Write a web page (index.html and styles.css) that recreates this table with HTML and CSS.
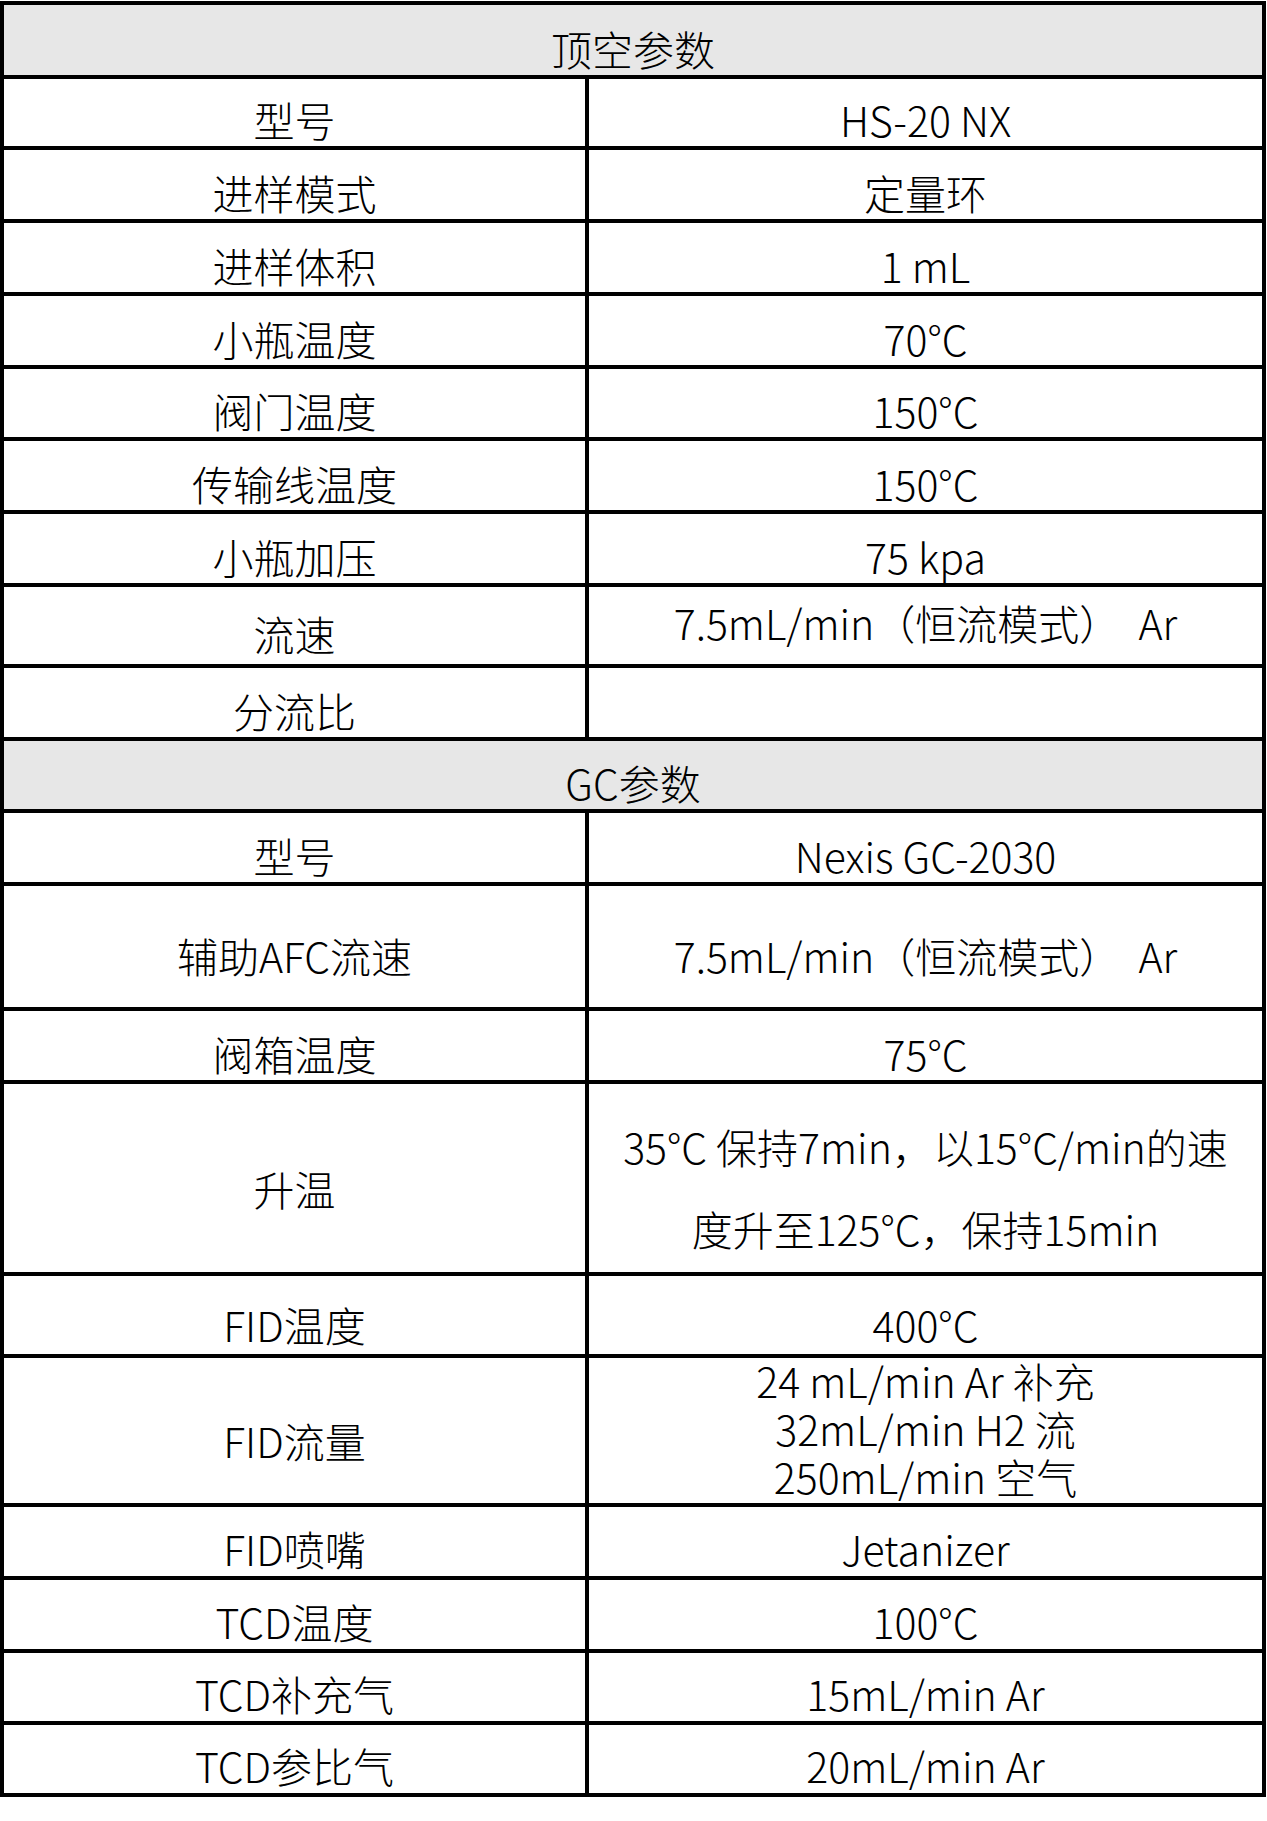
FILE: index.html
```html
<!DOCTYPE html>
<html lang="zh-CN">
<head>
<meta charset="utf-8">
<title>顶空参数 / GC参数</title>
<link rel="stylesheet" href="styles.css">
</head>
<body>
<div class="sheet">
  <div class="cell head">顶空参数</div>

  <div class="cell">型号</div><div class="cell">HS-20 NX</div>
  <div class="cell">进样模式</div><div class="cell">定量环</div>
  <div class="cell">进样体积</div><div class="cell">1 mL</div>
  <div class="cell">小瓶温度</div><div class="cell">70°C</div>
  <div class="cell">阀门温度</div><div class="cell">150°C</div>
  <div class="cell">传输线温度</div><div class="cell">150°C</div>
  <div class="cell">小瓶加压</div><div class="cell">75 kpa</div>
  <div class="cell pb4">流速</div><div class="cell pb15">7.5mL/min（恒流模式） &nbsp;Ar</div>
  <div class="cell">分流比</div><div class="cell"></div>

  <div class="cell head">GC参数</div>

  <div class="cell">型号</div><div class="cell">Nexis GC-2030</div>
  <div class="cell pb25">辅助AFC流速</div><div class="cell pb25">7.5mL/min（恒流模式） &nbsp;Ar</div>
  <div class="cell">阀箱温度</div><div class="cell">75°C</div>
  <div class="cell pb57">升温</div><div class="cell tall">35°C 保持7min，以15°C/min的速<br>度升至125°C，保持15min</div>
  <div class="cell pb3">FID温度</div><div class="cell pb3">400°C</div>
  <div class="cell pb36">FID流量</div><div class="cell lines">24 mL/min Ar 补充<br>32mL/min H2 流<br>250mL/min 空气</div>
  <div class="cell pb1">FID喷嘴</div><div class="cell pb1">Jetanizer</div>
  <div class="cell pb1">TCD温度</div><div class="cell pb1">100°C</div>
  <div class="cell pb1">TCD补充气</div><div class="cell pb1">15mL/min Ar</div>
  <div class="cell pb1">TCD参比气</div><div class="cell pb1">20mL/min Ar</div>
</div>
</body>
</html>
```

FILE: styles.css
```css
html, body {
  margin: 0;
  padding: 0;
  background: #fff;
}

body {
  padding-top: 1px;
  font-family: "Noto Sans CJK SC Light", "Noto Sans CJK SC DemiLight", "Noto Sans CJK SC", "Noto Sans", sans-serif;
  font-weight: 300;
  font-size: 41px;
  color: #000;
}

.sheet {
  width: 1266px;
  box-sizing: border-box;
  display: grid;
  grid-template-columns: 581px 673px;
  grid-template-rows: 70px 67px 69px 69px 69px 68px 69px 69px 77px 69px 68px 69px 121px 69px 188px 78px 145px 69px 69px 68px 68px;
  gap: 4px;
  padding: 4px;
  background: #000;
}

.cell {
  background: #fff;
  display: flex;
  align-items: flex-end;
  justify-content: center;
  text-align: center;
  line-height: 54px;
  white-space: nowrap;
}

.head {
  grid-column: 1 / span 2;
  background: #e7e7e7;
}

.pb1 { padding-bottom: 1px; }
.pb3 { padding-bottom: 3px; }
.pb4 { padding-bottom: 4px; }
.pb15 { padding-bottom: 15px; }
.pb25 { padding-bottom: 25px; }
.pb36 { padding-bottom: 36px; }
.pb57 { padding-bottom: 57px; }

.tall {
  line-height: 82px;
  padding-bottom: 3px;
}

.lines {
  line-height: 48px;
  padding-bottom: 3px;
}
```
